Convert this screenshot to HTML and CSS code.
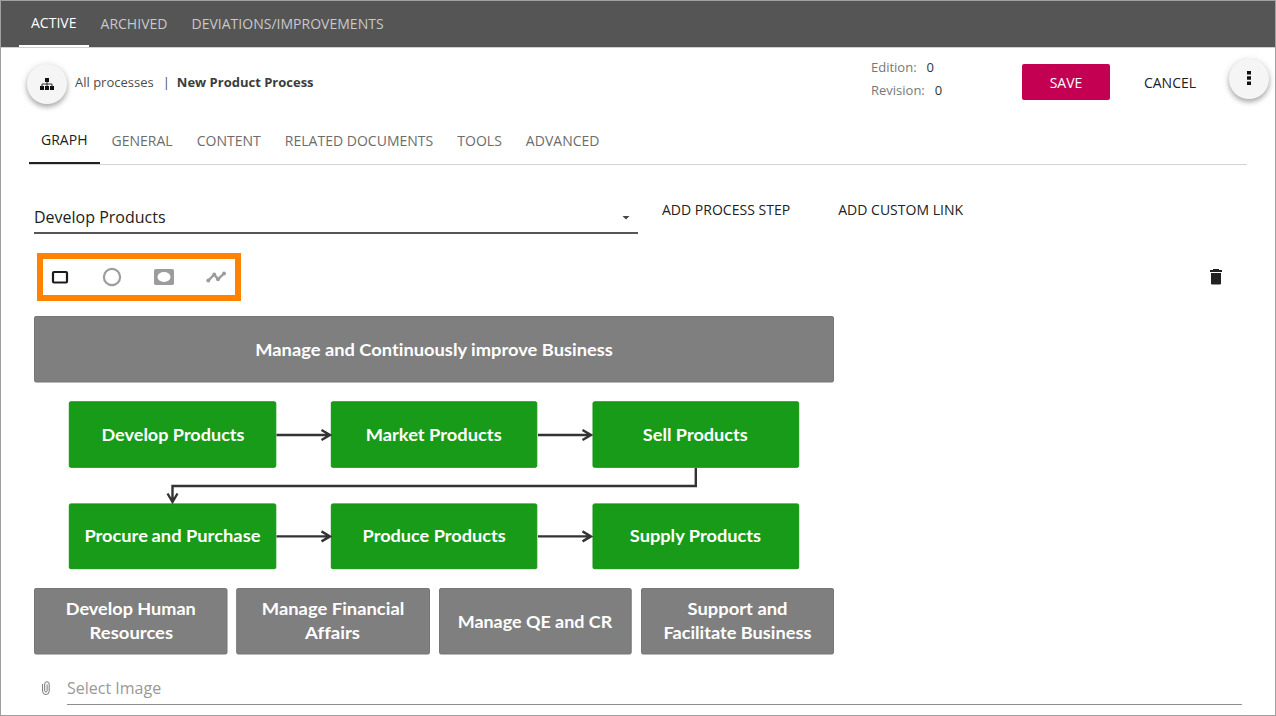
FILE: index.html
```html
<!DOCTYPE html>
<html lang="en">
<head>
<meta charset="utf-8">
<title>New Product Process</title>
<link rel="stylesheet" href="styles.css">
</head>
<body>
<div class="app">
  <nav class="topbar">
    <a class="top-tab active">ACTIVE</a>
    <a class="top-tab">ARCHIVED</a>
    <a class="top-tab">DEVIATIONS/IMPROVEMENTS</a>
  </nav>
  <header class="header">
    <button class="round-btn" aria-label="Process tree">
      <svg width="14" height="12" viewBox="0 0 14 12"><path d="M5 0h4v4H5zM0 8h4v4H0zM5 8h4v4H5zM10 8h4v4h-4z" fill="#111"/><path d="M7 4v4M2 8.500V6h10v2.500" fill="none" stroke="#333"/></svg>
    </button>
    <div class="crumbs"><span class="crumb">All processes</span><span class="sep">|</span><b class="current">New Product Process</b></div>
    <dl class="meta">
      <div class="meta-row"><dt>Edition:</dt><dd>0</dd></div>
      <div class="meta-row"><dt>Revision:</dt><dd>0</dd></div>
    </dl>
    <button class="save">SAVE</button>
    <button class="cancel">CANCEL</button>
    <button class="round-btn more" aria-label="More">
      <svg width="4" height="14" viewBox="0 0 4 14"><path d="M0 0h4v3.500H0zM0 5.200h4v3.500H0zM0 10.400h4v3.500H0z" fill="#111"/></svg>
    </button>
  </header>
  <nav class="tabs">
    <a class="tab active">GRAPH</a>
    <a class="tab">GENERAL</a>
    <a class="tab">CONTENT</a>
    <a class="tab">RELATED DOCUMENTS</a>
    <a class="tab">TOOLS</a>
    <a class="tab">ADVANCED</a>
  </nav>
  <div class="step-row">
    <div class="select"><span>Develop Products</span><svg width="8" height="4" viewBox="0 0 8 4"><path d="M.5 0h7L4 3.500z" fill="#444"/></svg></div>
    <a class="link">ADD PROCESS STEP</a>
    <a class="link">ADD CUSTOM LINK</a>
  </div>
  <div class="tool-row">
    <div class="shapes">
      <svg width="20" height="20" viewBox="0 0 20 20"><rect x="3" y="5" width="14" height="10.500" rx="1" fill="none" stroke="#1c1c1c" stroke-width="2.200"/></svg>
      <svg width="20" height="20" viewBox="0 0 20 20"><circle cx="10" cy="10" r="8.100" fill="none" stroke="#9c9c9c" stroke-width="2.200"/></svg>
      <svg width="20" height="20" viewBox="0 0 20 20"><rect y="2" width="20" height="16" rx="1.800" fill="#9c9c9c"/><ellipse cx="10" cy="10" rx="6.500" ry="5" fill="#fff"/></svg>
      <svg width="20" height="20" viewBox="0 0 20 20"><g fill="#9c9c9c"><circle cx="2.300" cy="13.500" r="2"/><circle cx="8.200" cy="7.600" r="2"/><circle cx="12" cy="12.200" r="2"/><circle cx="18" cy="6.500" r="2"/></g><path d="M2.300 13.500 8.200 7.600 12 12.200 18 6.500" fill="none" stroke="#9c9c9c" stroke-width="2.400"/></svg>
    </div>
    <svg class="trash" width="14" height="16" viewBox="0 0 14 16"><path d="M4 0h6v1h3v2H1V1h3zM2 4h10v10.500q0 1-1 1H3q-1 0-1-1z" fill="#212121"/></svg>
  </div>
  <svg class="diagram" width="804" height="342" viewBox="32 314 804 342">
    <g fill="#7f7f7f" stroke="#767676">
      <rect x="34.500" y="316.500" width="799" height="65.500" rx="1.500"/>
      <rect x="34.500" y="588.500" width="192.500" height="65.500" rx="1.500"/>
      <rect x="236.700" y="588.500" width="192.800" height="65.500" rx="1.500"/>
      <rect x="439.500" y="588.500" width="191.700" height="65.500" rx="1.500"/>
      <rect x="641.500" y="588.500" width="192" height="65.500" rx="1.500"/>
    </g>
    <g fill="#189b18" stroke="#109510">
      <rect x="69.300" y="401.800" width="206.500" height="65.500" rx="1.500"/>
      <rect x="331.300" y="401.800" width="205.500" height="65.500" rx="1.500"/>
      <rect x="593" y="401.800" width="205.700" height="65.500" rx="1.500"/>
      <rect x="69.300" y="503.900" width="206.500" height="64.800" rx="1.500"/>
      <rect x="331.300" y="503.900" width="205.500" height="64.800" rx="1.500"/>
      <rect x="593" y="503.900" width="205.700" height="64.800" rx="1.500"/>
    </g>
    <g class="wires">
      <path d="M276.500 435H330M321.500 430l8.500 5-8.500 5"/>
      <path d="M538 435H591.500M582.500 430l8.500 5-8.500 5"/>
      <path d="M276.500 536.400H330M321.500 531.400l8.500 5-8.500 5"/>
      <path d="M538 536.400H591.500M582.500 531.400l8.500 5-8.500 5"/>
      <path d="M695.800 468V486H172.500V502M167.500 493.500l5 8.500 5-8.500"/>
    </g>
    <g class="labels">
      <text x="255.300" y="356" textLength="357.500" lengthAdjust="spacingAndGlyphs">Manage and Continuously improve Business</text>
      <text x="101.500" y="441" textLength="143" lengthAdjust="spacingAndGlyphs">Develop Products</text>
      <text x="365.700" y="441" textLength="136" lengthAdjust="spacingAndGlyphs">Market Products</text>
      <text x="642.800" y="441" textLength="105" lengthAdjust="spacingAndGlyphs">Sell Products</text>
      <text x="84.400" y="542.400" textLength="63.500" lengthAdjust="spacingAndGlyphs">Procure</text>
      <text x="151.500" y="542.400" textLength="109" lengthAdjust="spacingAndGlyphs">and Purchase</text>
      <text x="362.600" y="542.400" textLength="143" lengthAdjust="spacingAndGlyphs">Produce Products</text>
      <text x="629.800" y="542.400" textLength="131.300" lengthAdjust="spacingAndGlyphs">Supply Products</text>
      <text x="65.800" y="615.400" textLength="130" lengthAdjust="spacingAndGlyphs">Develop Human</text>
      <text x="89.600" y="639.200" textLength="83.500" lengthAdjust="spacingAndGlyphs">Resources</text>
      <text x="261.800" y="615.400" textLength="142.500" lengthAdjust="spacingAndGlyphs">Manage Financial</text>
      <text x="305" y="639.200" textLength="55" lengthAdjust="spacingAndGlyphs">Affairs</text>
      <text x="457.700" y="628" textLength="154.500" lengthAdjust="spacingAndGlyphs">Manage QE and CR</text>
      <text x="687.500" y="615.400" textLength="100" lengthAdjust="spacingAndGlyphs">Support and</text>
      <text x="663.400" y="639.200" textLength="148" lengthAdjust="spacingAndGlyphs">Facilitate Business</text>
    </g>
  </svg>
  <div class="file-row">
    <svg width="8" height="14" viewBox="0 0 8 14"><path d="M.6 3v7.200a3.200 3.200 0 0 0 6.600 0V3a2.200 2.200 0 0 0-4.500 0v6.800a1.100 1.100 0 0 0 2.400 0V3.500" fill="none" stroke="#777"/></svg>
    <div class="file-input">Select Image</div>
  </div>
</div>
</body>
</html>
```
FILE: styles.css
```css
* { box-sizing: border-box; }
body { margin: 0; background: #fff; font-family: "Open Sans", sans-serif; color: #212121; }
svg { display: block; flex: none; }
button { font: inherit; color: inherit; border: 0; padding: 0; background: none; }
.app { width: 1276px; height: 716px; border: 1px solid #a0a0a0; overflow: hidden; display: flex; flex-direction: column; }
.topbar { height: 47px; flex: none; display: flex; padding-left: 18px; background: #555; border-bottom: 1px solid #d0d0d0; font-size: 14px; letter-spacing: .015px; line-height: 46px; color: #c8c8c8; }
.top-tab { padding: 0 12px; white-space: nowrap; }
.top-tab.active { color: #fff; border-bottom: 2px solid #fff; line-height: 44px; height: 46px; }
.header { height: 70px; flex: none; display: flex; padding-left: 26px; font-size: 13px; }
.round-btn { width: 40px; height: 40px; margin-top: 16px; border-radius: 50%; background: #f5f5f5; box-shadow: 0 3px 5px rgba(0,0,0,.28), 0 1px 8px rgba(0,0,0,.12); display: flex; align-items: center; justify-content: center; flex: none; }
.round-btn.more { margin: 11px 0 0 15px; }
.round-btn.more svg { margin-top: -2px; }
.crumbs { width: 804px; flex: none; padding: 25px 0 0 8px; line-height: 18px; white-space: nowrap; color: #4c4c4c; }
.sep { margin: 0 8px 0 9px; }
.current { color: #3c3c3c; font-weight: 700; margin-left: -1px; }
.meta { width: 151px; margin: 8px 0 0; color: #777; line-height: 23px; flex: none; }
.meta-row { display: flex; gap: 10px; }
.meta dd { margin: 0; color: #333; }
.save { width: 88px; height: 36px; margin-top: 16px; border-radius: 2px; background: #c40052; color: #fff; font-size: 14px; flex: none; }
.cancel { width: 89px; height: 36px; margin: 16px 0 0 15px; font-size: 14px; flex: none; padding-left: 1px; }
.tabs { height: 47px; flex: none; display: flex; margin: 0 28px; border-bottom: 1px solid #d4d4d4; font-size: 14px; letter-spacing: .015px; line-height: 46px; color: #6c6c6c; }
.tab { padding: 0 12px; white-space: nowrap; }
.tab.active { color: #212121; border-bottom: 2px solid #212121; line-height: 44px; height: 46px; }
.step-row { height: 69px; flex: none; display: flex; padding-left: 33px; }
.select { width: 604px; height: 69px; border-bottom: 2px solid #555; padding: 37px 8px 0 0; display: flex; justify-content: space-between; font-size: 16px; line-height: 30px; }
.select svg { margin-top: 14px; }
.link { margin: 34px 0 0 24px; font-size: 14px; letter-spacing: .015px; line-height: 22px; white-space: nowrap; }
.link + .link { margin-left: 48px; }
.tool-row { height: 67px; flex: none; display: flex; justify-content: space-between; padding: 19px 52px 0 36px; }
.shapes { width: 204px; height: 48px; border: 6px solid #ff8300; display: flex; gap: 32px; align-items: center; padding-left: 7px; }
.trash { margin-top: 16px; }
.diagram { margin: 13px 0 0 31px; }
.wires { fill: none; stroke: #333; stroke-width: 2.400; }
.labels { fill: #fff; font: bold 17.800px Lato, sans-serif; font-variant-ligatures: none; }
.file-row { flex: none; display: flex; padding: 13px 33px 0 41px; }
.file-row svg { margin-top: 12px; }
.file-input { flex: 1; margin-left: 17px; height: 36px; padding-top: 7px; border-bottom: 1px solid #8f8f8f; color: #999; font-size: 16px; line-height: 24px; }
```
